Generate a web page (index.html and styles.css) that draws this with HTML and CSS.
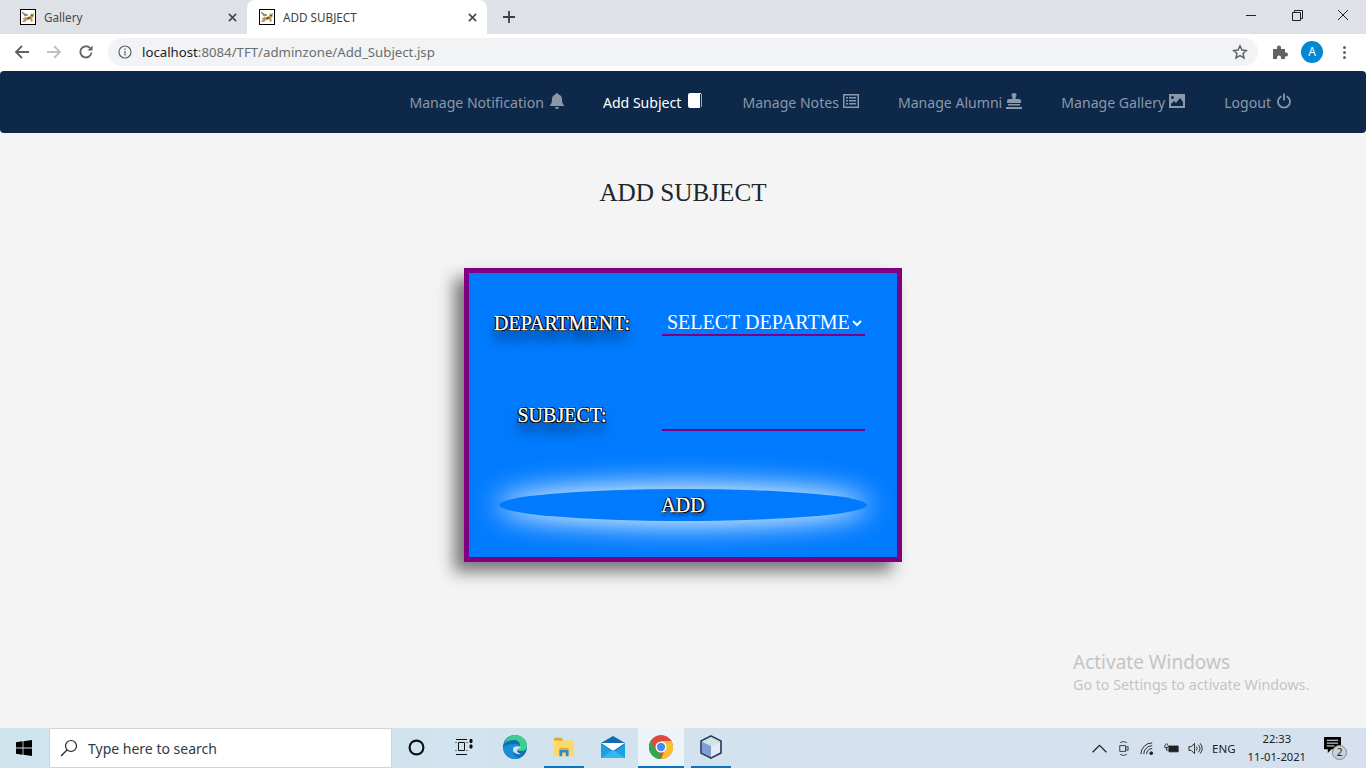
FILE: index.html
```html
<!DOCTYPE html>
<html lang="en">
<head>
  <meta charset="UTF-8" />
  <title>ADD SUBJECT</title>
  <link rel="stylesheet" href="styles.css">
</head>
<body>
  <svg class="defs" width="0" height="0">
    <symbol id="tomcat" viewBox="0 0 16 16">
      <rect x=".5" y=".5" width="15" height="15" fill="#fff" stroke="#000"/>
      <path d="M2 3l3 2 3 1-3 1zM3 10l3-2" fill="#8d8a80" stroke="#8d8a80"/>
      <path d="M2 13l3-4 5-2 1-3 1 1 2-1-.5 4-1.500 1 1 3-2 1-1-3-3 1-2 2z" fill="#c19a4b"/>
      <path d="M7 9l3-1 .5 1.500-3 1zM11 6h2v1h-2z" fill="#5f5034"/>
    </symbol>
  </svg>

  <!-- browser tabs -->
  <div class="tabstrip">
    <div class="tab">
      <svg class="favicon"><use href="#tomcat"/></svg>
      <span class="tab-title">Gallery</span>
      <svg class="tab-close" viewBox="0 0 10 10"><path d="M1 1l8 8M9 1l-8 8"/></svg>
    </div>
    <div class="tab active">
      <svg class="favicon"><use href="#tomcat"/></svg>
      <span class="tab-title">ADD SUBJECT</span>
      <svg class="tab-close" viewBox="0 0 10 10"><path d="M1 1l8 8M9 1l-8 8"/></svg>
    </div>
    <svg class="new-tab" viewBox="0 0 12 12"><path d="M6 0v12M0 6h12"/></svg>
    <div class="win-controls">
      <svg viewBox="0 0 46 16"><path d="M18 8.500h10"/></svg>
      <svg viewBox="0 0 46 16"><path d="M18.500 5.500h8v8h-8zM20.500 5.500v-2h8v8h-2"/></svg>
      <svg viewBox="0 0 46 16"><path d="M18 3l10 10M28 3l-10 10"/></svg>
    </div>
  </div>

  <!-- address bar -->
  <div class="toolbar">
    <svg class="tool-btn" viewBox="0 0 16 16"><path d="M15 8H2M8 2L2 8l6 6" class="line"/></svg>
    <svg class="tool-btn" viewBox="0 0 16 16"><path d="M1 8h13M8 2l6 6-6 6" class="line faded"/></svg>
    <svg class="tool-btn" viewBox="0 0 16 16"><path d="M13.500 8.500A5.600 5.600 0 1 1 12 4" class="line"/><path d="M14.500 1.500v5h-5z" fill="#5f6368"/></svg>
    <div class="omnibox">
      <svg class="info" viewBox="0 0 14 14"><circle cx="7" cy="7" r="6"/><path d="M7 6v4.500M7 3.500v1.500"/></svg>
      <span class="url"><b>localhost</b>:8084/TFT/adminzone/Add_Subject.jsp</span>
      <svg class="star" viewBox="0 0 16 16"><path d="M8 1.800l1.900 4.200 4.500.5-3.400 3 1 4.500L8 11.700 4 14l1-4.500-3.400-3 4.500-.5z"/></svg>
    </div>
    <svg class="puzzle" viewBox="0 0 16 16"><path d="M1 5h4V3.500a2 2 0 0 1 4 0V5h4v3.500h1a2 2 0 0 1 0 4h-1V15H9v-1.500a2 2 0 0 0-4 0V15H1z"/></svg>
    <span class="avatar">A</span>
    <span class="menu-dots"><i></i><i></i><i></i></span>
  </div>

  <!-- site nav -->
  <nav class="navbar">
    <a class="nav-link" href="#">Manage Notification
      <svg viewBox="0 0 14 16"><path d="M7 0a1.200 1.200 0 0 1 1.200 1.200C10.600 1.700 12 3.700 12 6c0 4 1 5 2 6.200V13H0v-.8C1 11 2 10 2 6c0-2.300 1.400-4.300 3.800-4.800A1.200 1.200 0 0 1 7 0zM5 14h4a2 2 0 0 1-4 0z"/></svg>
    </a>
    <a class="nav-link active" href="#">Add Subject
      <svg class="book" viewBox="0 0 14 16"><path d="M2 0h11v1H12v14H2a2 2 0 0 1-2-2V2a2 2 0 0 1 2-2z"/><path d="M13 1h1v13h-1z" fill="#d9a33a"/></svg>
    </a>
    <a class="nav-link" href="#">Manage Notes
      <svg class="wide" viewBox="0 0 16 14"><path fill-rule="evenodd" d="M0 0h16v14H0zM1.500 1.500v11h13v-11zM3 3h2v1.500H3zM6 3h7v1.500H6zM3 6h2v1.500H3zM6 6h7v1.500H6zM3 9h2v1.500H3zM6 9h7v1.500H6z"/></svg>
    </a>
    <a class="nav-link" href="#">Manage Alumni
      <svg class="wide" viewBox="0 0 16 16"><path d="M5.500 1.500a2.500 1.500 0 0 1 5 0c0 2-1 2.500-1 4.500H13a2 2 0 0 1 2 2v2H1V8a2 2 0 0 1 2-2h3.500c0-2-1-2.500-1-4.500zM2 11h12v1.500H2zM0 14h16v2H0z"/></svg>
    </a>
    <a class="nav-link" href="#">Manage Gallery
      <svg class="wide" viewBox="0 0 16 14"><path fill-rule="evenodd" d="M0 0h16v14H0zM2 3.500a1.500 1.500 0 1 0 3 0 1.500 1.500 0 0 0-3 0zM2 12h12V8l-3-4-4 5-2-2-3 3z"/></svg>
    </a>
    <a class="nav-link" href="#">Logout
      <svg viewBox="0 0 14 16"><path d="M4.300 3.300a6 6 0 1 0 5.400 0" fill="none" stroke="currentColor" stroke-width="1.800"/><path d="M7 .5v7" stroke="currentColor" stroke-width="1.800"/></svg>
    </a>
  </nav>

  <main class="content">
    <h1 class="page-title">ADD SUBJECT</h1>
    <form class="subject-form">
      <label class="field-label" for="dept">DEPARTMENT:</label>
      <select class="field" id="dept">
        <option>SELECT DEPARTMENT</option>
      </select>
      <label class="field-label subject" for="subject">SUBJECT:</label>
      <input class="field" id="subject" type="text">
      <button class="add-btn" type="button">ADD</button>
    </form>
    <div class="watermark">
      <p class="wm-title">Activate Windows</p>
      <p class="wm-sub">Go to Settings to activate Windows.</p>
    </div>
  </main>

  <!-- windows taskbar -->
  <footer class="taskbar">
    <div class="start">
      <svg viewBox="0 0 16 16"><path d="M0 2.300l6.600-1v6.300H0zM7.400 1.200L16 0v7.600H7.400zM0 8.400h6.600v6.300l-6.600-1zM7.400 8.400H16V16l-8.600-1.200z"/></svg>
    </div>
    <div class="search">
      <svg viewBox="0 0 18 18"><circle cx="11" cy="7" r="5.500"/><path d="M7 11l-6 6"/></svg>
      <span>Type here to search</span>
    </div>
    <div class="task-item">
      <svg class="cortana" viewBox="0 0 16 16"><circle cx="8" cy="8" r="6.500"/></svg>
    </div>
    <div class="task-item">
      <svg class="taskview" viewBox="0 0 18 16"><path d="M1 .5h11M1 15.500h11M3.500 3.500h6v8h-6zM.5 3.500h1M.5 11.500h1M11.500 3.500h1M11.500 11.500h1"/><path d="M15 .5h2v3h-2zM15 6h2v3h-2z" class="solid"/></svg>
    </div>
    <div class="task-item edge">
      <svg viewBox="0 0 24 24">
        <circle cx="12" cy="12" r="12" fill="#0f6fb8"/>
        <path d="M1 9C3 3 8 0 12 0c7 0 12 5 12 11 0 4-3 5-6 5-3 0-5-1-5-2 3 0 4-2 4-4 0-3-3-5-6-5C7 5 3 6 1 9z" fill="#3ccf8e"/>
        <path d="M12 9c3 0 5 1 5 3-3-1-7 0-7 4 0 3 3 6 6 7-2 1-3 1-4 1C6 24 1 20 0 13c2-3 7-4 12-4z" fill="#1a8fd8"/>
        <path d="M11 12c3-1 6-1 7 1-2 0-4 1-4 3 0 1 1 2 4 3-3 1-8-1-8-4 0-1 0-2 1-3z" fill="#d3e4ee"/>
      </svg>
    </div>
    <div class="task-item open files">
      <svg viewBox="0 0 24 20">
        <path d="M1 1a1 1 0 0 1 1-1h7l2 2h0v2H1z" fill="#e0a32e"/>
        <rect x="1" y="3" width="22" height="17" rx="1" fill="#fcd96b"/>
        <path d="M7 13h10v7h-3v-4h-4v4H7z" fill="#2f89c9"/>
        <path d="M7 11h10v2H7z" fill="#e8a82f"/>
      </svg>
    </div>
    <div class="task-item mail">
      <svg viewBox="0 0 24 22">
        <path d="M0 7l12-7 12 7v15H0z" fill="#0f6cb5"/>
        <path d="M0 7h24L12 15z" fill="#fff"/>
        <path d="M0 8l12 8 12-8v14H0z" fill="#1ba1e2"/>
        <path d="M0 22l12-8 12 8z" fill="#37b6ee"/>
      </svg>
    </div>
    <div class="task-item open current">
      <svg viewBox="0 0 24 24">
        <circle cx="12" cy="12" r="12" fill="#de4b3e"/>
        <path d="M12 24A12 12 0 0 1 1.600 6L7 15.500l4 1.500z" fill="#2da94f"/>
        <path d="M12 24a12 12 0 0 0 10.400-18H12l4 8z" fill="#fbc02d"/>
        <circle cx="12" cy="12" r="5.500" fill="#fff"/>
        <circle cx="12" cy="12" r="4.200" fill="#4a8af4"/>
      </svg>
    </div>
    <div class="task-item open box">
      <svg viewBox="0 0 22 24">
        <path d="M11 1l10 5v12l-10 5-10-5V6z" fill="#b9cde8" stroke="#2a3a5c" stroke-width="1.600"/>
        <path d="M11 2l9 4.500-9 4.500-9-4.500z" fill="#cfe6dc"/>
        <path d="M11 11v11l-9-4.500V7z" fill="#7f9ed6"/>
        <path d="M11 11l9-4v10l-9 5z" fill="#e4e9f5"/>
      </svg>
    </div>

    <div class="tray">
      <svg class="tray-icon" viewBox="0 0 12 8"><path d="M.5 7L6 1.500 11.500 7"/></svg>
      <svg class="tray-icon" viewBox="0 0 14 18"><path d="M3 2c2-1.500 6-1.500 8 0M3 16c2 1.500 6 1.500 8 0M2.500 5.500h7v7h-7zM9.500 8l3-1.500v5l-3-1.500"/></svg>
      <svg class="tray-icon" viewBox="0 0 16 14"><path d="M1 13A12 12 0 0 1 13 1M4 13a9 9 0 0 1 9-9M7 13a6 6 0 0 1 6-6"/><circle cx="12" cy="12" r="1.500" class="solid"/></svg>
      <svg class="tray-icon" viewBox="0 0 18 12"><path d="M1 2v3h4V2M2 0v2M4 0v2M3 5v3h3" /><path d="M6 3h11v7H6z" class="solid"/></svg>
      <svg class="tray-icon" viewBox="0 0 16 14"><path d="M1 5h2.500L7 1.500v11L3.500 9H1zM9 5a3 3 0 0 1 0 4M11 3a6 6 0 0 1 0 8M13 1.500a9 9 0 0 1 0 11"/></svg>
      <span class="lang">ENG</span>
      <div class="clock"><span>22:33</span><span>11-01-2021</span></div>
      <div class="notify">
        <svg viewBox="0 0 18 17"><path d="M0 0h18v13H8l-4 4v-4H0z"/><path d="M3 3.500h12M3 6.500h12M3 9.500h8" stroke="#fff"/></svg>
        <span class="notify-count">2</span>
      </div>
    </div>
  </footer>
</body>
</html>
```

FILE: styles.css
```css
* {
  box-sizing: border-box;
}
html, body {
  height: 100%;
}
body {
  margin: 0;
  display: flex;
  flex-direction: column;
  overflow: hidden;
  background: #f4f4f4;
  font-family: "Noto Sans", "Open Sans", sans-serif;
}
.defs {
  position: absolute;
}

/* tabs */
.tabstrip {
  height: 34px;
  flex: none;
  display: flex;
  align-items: stretch;
  padding-left: 8px;
  background: #dee1e6;
}
.tab {
  width: 239px;
  display: flex;
  align-items: center;
  padding: 0 9px 0 12px;
  border-radius: 8px 8px 0 0;
  font-size: 11.700px;
  color: #45494d;
}
.tab.active {
  width: 240px;
  background: #fff;
  color: #3c4043;
}
.favicon {
  width: 16px;
  height: 16px;
  margin-right: 8px;
  flex: none;
}
.tab-title {
  flex: 1;
}
.tab-close {
  width: 9px;
  height: 9px;
  margin-right: 1px;
  fill: none;
  stroke: #45484c;
  stroke-width: 1.800;
}
.new-tab {
  width: 12px;
  height: 12px;
  margin: 11px 0 0 16px;
  fill: none;
  stroke: #3c4043;
  stroke-width: 1.800;
}
.win-controls {
  margin-left: auto;
  display: flex;
  align-items: flex-start;
}
.win-controls svg {
  width: 46px;
  height: 16px;
  margin-top: 7px;
  fill: none;
  stroke: #202124;
  stroke-width: 1;
}

/* address bar */
.toolbar {
  height: 37px;
  flex: none;
  display: flex;
  align-items: center;
  padding: 0 0 1px 14px;
  background: #fff;
}
.tool-btn {
  width: 16px;
  height: 16px;
  margin-right: 16px;
  flex: none;
}
.line {
  fill: none;
  stroke: #5f6368;
  stroke-width: 1.800;
}
.line.faded {
  stroke: #bdc1c6;
}
.omnibox {
  width: 1150px;
  height: 28px;
  margin-left: -2px;
  display: flex;
  align-items: center;
  padding: 0 10px;
  border-radius: 14px;
  background: #f1f3f4;
}
.info {
  width: 14px;
  height: 14px;
  flex: none;
  fill: none;
  stroke: #5f6368;
  stroke-width: 1.200;
}
.url {
  flex: 1;
  margin-left: 10px;
  font-size: 13.230px;
  color: #6a6d71;
}
.url b {
  font-weight: 400;
  color: #202124;
}
.star {
  width: 16px;
  height: 16px;
  fill: none;
  stroke: #5f6368;
  stroke-width: 1.500;
}
.puzzle {
  width: 16px;
  height: 16px;
  margin-left: 14px;
  fill: #5f6368;
}
.avatar {
  width: 22px;
  height: 22px;
  margin-left: 13px;
  border-radius: 50%;
  background: #0288d1;
  color: #fff;
  font-size: 12px;
  line-height: 22px;
  text-align: center;
}
.menu-dots {
  margin-left: 20px;
  display: flex;
  flex-direction: column;
  gap: 2px;
}
.menu-dots i {
  width: 3px;
  height: 3px;
  border-radius: 50%;
  background: #5f6368;
}

/* nav */
.navbar {
  height: 62px;
  flex: none;
  display: flex;
  justify-content: flex-end;
  align-items: center;
  gap: 39px;
  padding-right: 75px;
  border-radius: 4px;
  background: #0d2849;
}
.nav-link {
  display: flex;
  align-items: center;
  gap: 6px;
  font-size: 14.080px;
  color: #8b98a9;
  text-decoration: none;
  white-space: nowrap;
}
.nav-link.active {
  color: #fff;
}
.nav-link svg {
  width: 14px;
  height: 16px;
  fill: currentColor;
  margin-top: -3px;
}
.nav-link svg.book {
  width: 16px;
}
.nav-link svg.wide {
  width: 16px;
  margin-left: -2px;
}

/* form */
.content {
  flex: 1;
  position: relative;
  display: flex;
  flex-direction: column;
  align-items: center;
}
.page-title {
  margin: 45px 0 60px;
  font: 400 25.200px/30px "Liberation Serif", serif;
  color: #212529;
}
.subject-form {
  width: 438px;
  height: 294px;
  display: grid;
  grid-template-columns: 186px 203px 25px;
  grid-template-rows: 26px 27px 32px;
  column-gap: 7px;
  row-gap: 68px;
  align-content: start;
  padding-top: 37px;
  border: 5px solid #800080;
  background: #007bff;
  box-shadow: -10px 10px 15px #7a7a7a;
  font-family: "Liberation Serif", serif;
}
.subject-form > .add-btn {
  margin-top: -10px;
}
.subject-form > .field {
  grid-column: 2;
}
.field-label {
  grid-column: 1;
  align-self: center;
  justify-self: center;
  font-size: 20px;
  line-height: 24px;
  color: #fff;
  -webkit-text-stroke: .3px #fff;
  text-shadow: 1px 1px 0 #000, -1px 0 0 #000, 1px -1px 0 #000, -1px 1px 0 #000, 0 10px 12px rgba(0, 0, 0, .8);
}
.field-label.subject {
  margin-top: -5px;
}
.field {
  width: 100%;
  height: 100%;
  padding: 0 0 0 1px;
  border: 0;
  border-bottom: 2px solid #800080;
  border-radius: 0;
  outline: 0;
  background: transparent;
  color: #fff;
  font: 20px "Liberation Serif", serif;
}
.add-btn {
  grid-column: 1 / -1;
  justify-self: center;
  width: 368px;
  height: 32px;
  padding: 0;
  border: 0;
  border-radius: 50%;
  background: #007bff;
  box-shadow: 0 0 30px 3px #fff;
  color: #fff;
  font: 20px "Liberation Serif", serif;
  -webkit-text-stroke: .3px #fff;
  text-shadow: 1px 1px 0 #000, -1px 0 0 #000, 1px -1px 0 #000, 1px 2px 4px #000;
}

/* activation notice sits over the page */
.watermark {
  position: absolute;
  left: 1073px;
  top: 517px;
  color: #c4c4c4;
}
.watermark p {
  margin: 0;
}
.wm-title {
  font-size: 19px;
  line-height: 24px;
}
.wm-sub {
  font-size: 14.280px;
  line-height: 22px;
}

/* taskbar */
.taskbar {
  height: 40px;
  flex: none;
  display: flex;
  align-items: stretch;
  background: linear-gradient(90deg, #cfe5ee, #d6e0ee);
}
.start {
  width: 49px;
  display: flex;
  align-items: center;
  justify-content: center;
  padding-right: 2px;
}
.start svg {
  width: 16px;
  height: 16px;
  fill: #000;
}
.search {
  width: 343px;
  display: flex;
  align-items: center;
  gap: 10px;
  padding-left: 10px;
  border: 1px solid #d0d4d8;
  background: #fff;
  font-size: 14px;
  color: #2f3a44;
}
.search svg {
  width: 18px;
  height: 18px;
  fill: none;
  stroke: #222;
  stroke-width: 1.200;
}
.task-item {
  width: 48px;
  display: flex;
  align-items: center;
  justify-content: center;
  border-bottom: 2px solid transparent;
}
.task-item svg {
  width: 24px;
  height: 24px;
}
.task-item.edge {
  margin-left: 3px;
}
.task-item.files {
  width: 40px;
  margin-left: 5px;
}
.task-item.files svg {
  width: 22px;
  height: 20px;
}
.task-item.mail {
  margin-left: 5px;
}
.task-item.current {
  width: 46px;
  margin-left: 1px;
  background: #ecf4f8;
}
.task-item.box {
  width: 40px;
  margin-left: 7px;
}
.task-item.open {
  border-bottom-color: #0a74c4;
}
.task-item svg.cortana {
  width: 17px;
  height: 17px;
  fill: none;
  stroke: #111;
  stroke-width: 2;
}
.task-item svg.taskview {
  width: 18px;
  height: 16px;
  fill: none;
  stroke: #111;
  stroke-width: 1;
}
.taskview .solid {
  fill: #111;
}
.tray {
  margin-left: auto;
  display: flex;
  align-items: center;
  padding-right: 18px;
  color: #222;
}
.tray-icon {
  width: 15px;
  height: 15px;
  margin-right: 9px;
  fill: none;
  stroke: #222;
  stroke-width: 1;
}
.tray-icon .solid {
  fill: #222;
}
.lang {
  margin: 0 12px 0 0;
  font-size: 11.500px;
}
.clock {
  display: flex;
  flex-direction: column;
  align-items: center;
  gap: 3px;
  font-size: 11.200px;
  line-height: 15px;
  margin-top: -1px;
}
.notify {
  position: relative;
  width: 24px;
  height: 24px;
  margin-left: 18px;
}
.notify svg {
  width: 17px;
  height: 16px;
  fill: #000;
}
.notify-count {
  position: absolute;
  left: 8px;
  top: 9px;
  width: 15px;
  height: 15px;
  border: 1px solid #888;
  border-radius: 50%;
  background: #c8d0d8;
  font-size: 10px;
  line-height: 13px;
  text-align: center;
}
```
